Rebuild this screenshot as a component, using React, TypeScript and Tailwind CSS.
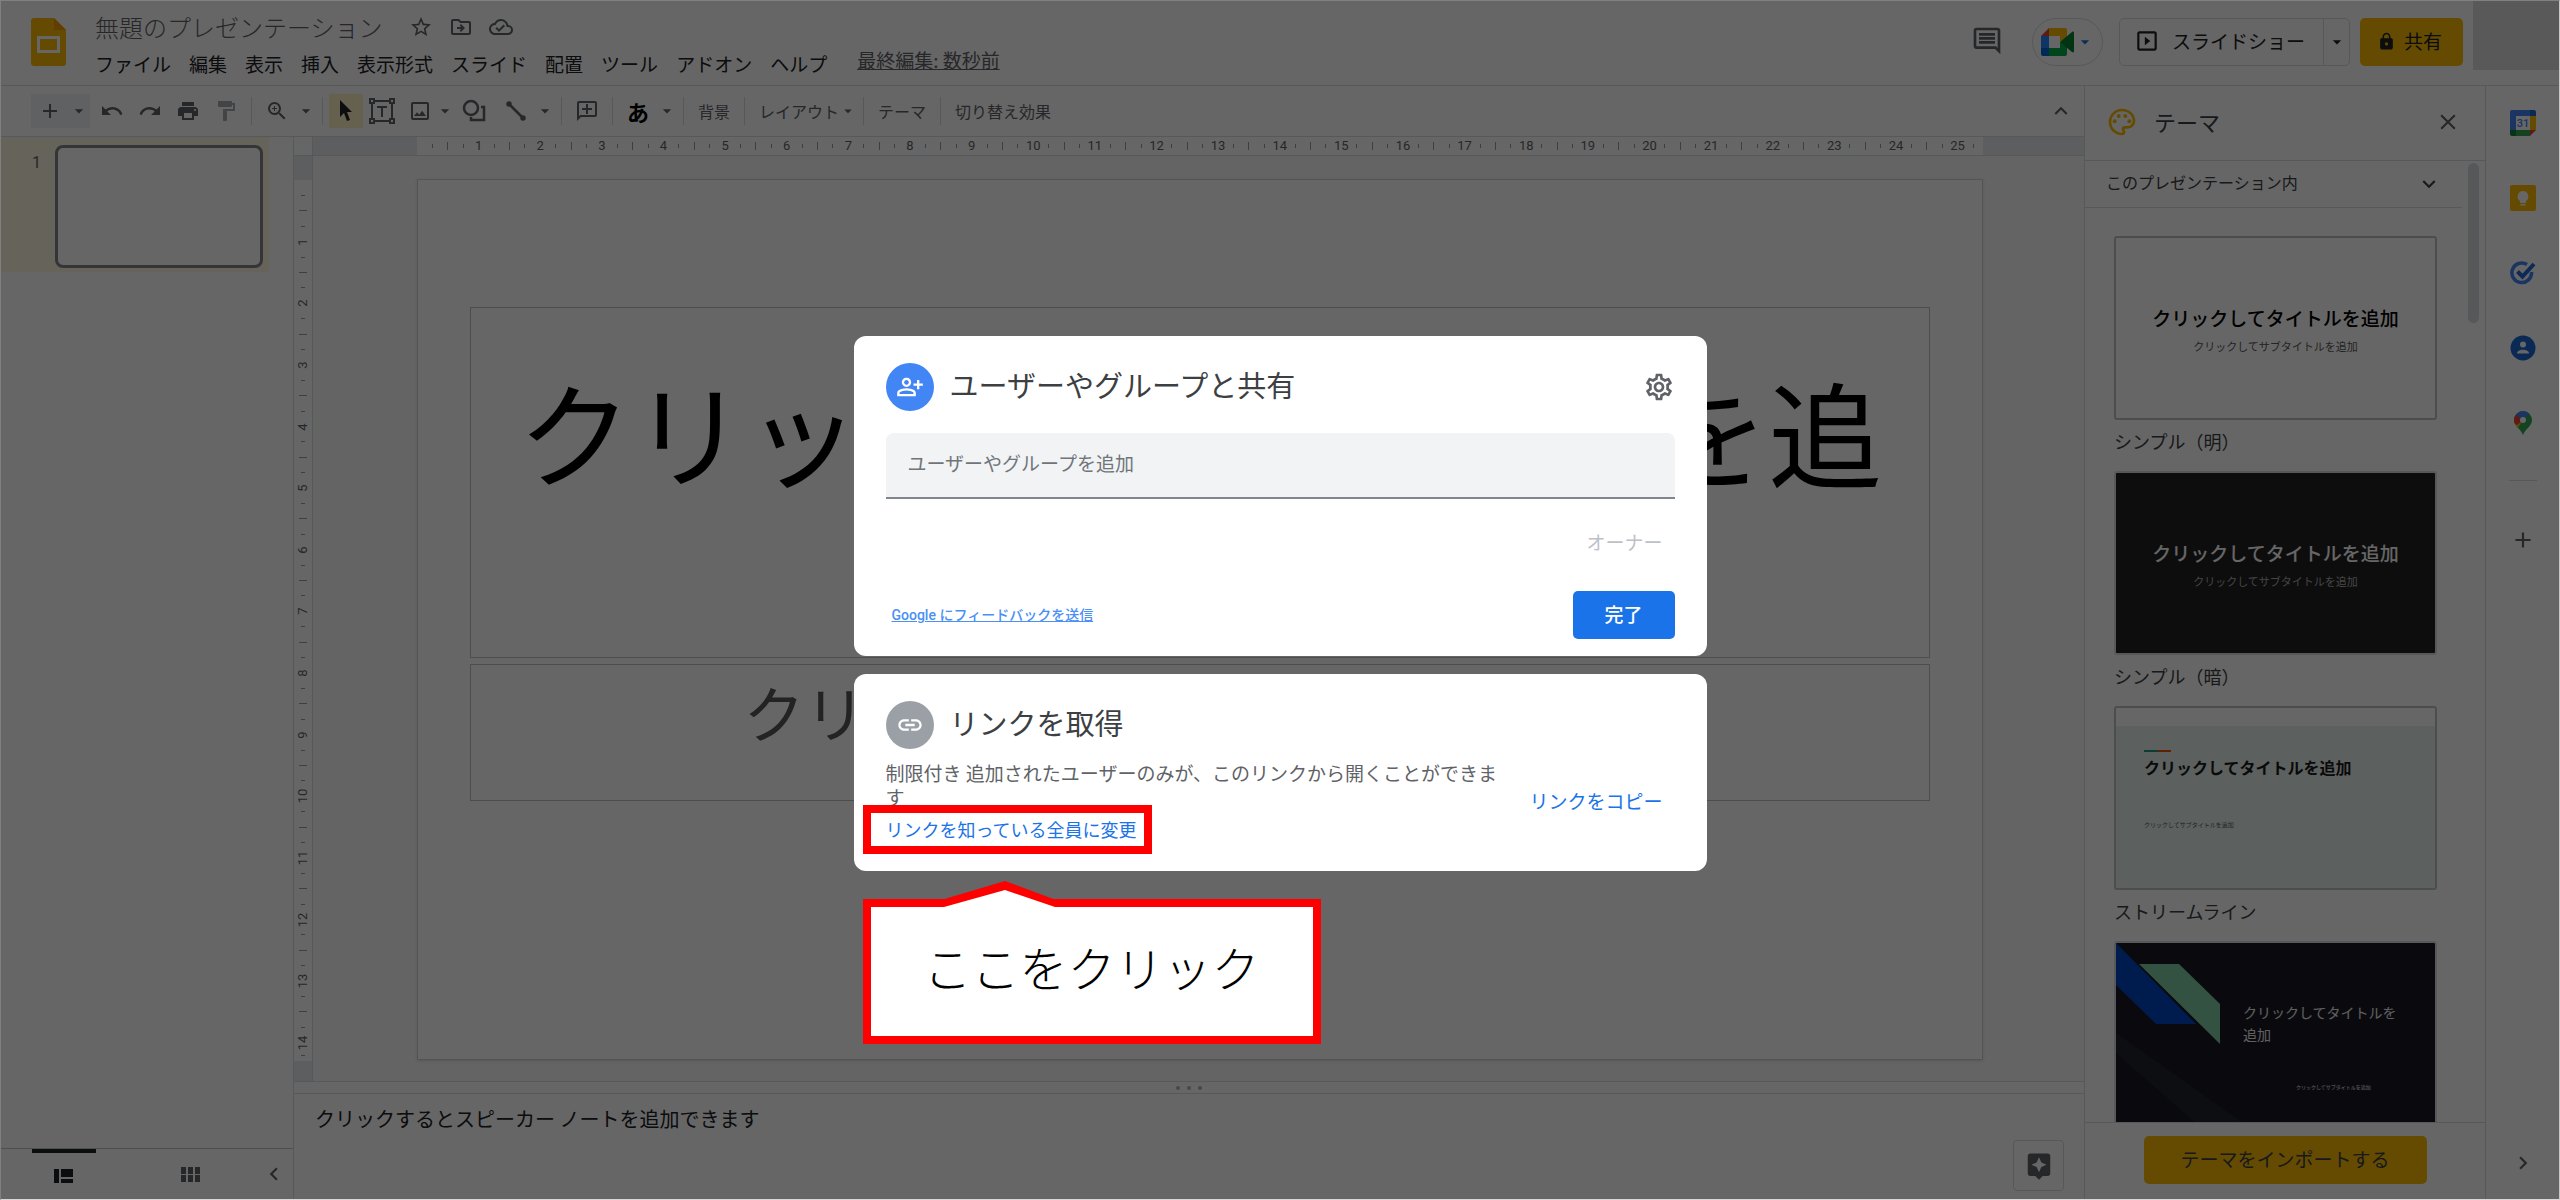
import type { ReactNode } from "react"
import {
  MdAdd,
  MdArrowDropDown,
  MdAssistant,
  MdChevronLeft,
  MdChevronRight,
  MdClose,
  MdExpandLess,
  MdExpandMore,
  MdFormatPaint,
  MdLink,
  MdLock,
  MdOutlineAddComment,
  MdOutlineCloudDone,
  MdOutlineDriveFileMove,
  MdOutlineImage,
  MdOutlineInsertComment,
  MdOutlinePalette,
  MdOutlinePersonAddAlt,
  MdOutlineSettings,
  MdOutlineSlideshow,
  MdPrint,
  MdRedo,
  MdStarBorder,
  MdUndo,
  MdZoomIn,
} from "react-icons/md"

const menus = ["ファイル", "編集", "表示", "挿入", "表示形式", "スライド", "配置", "ツール", "アドオン", "ヘルプ"]

function SlidesLogo() {
  return (
    <svg viewBox="0 0 35 48" className="h-12 w-[35px]" aria-hidden="true">
      <path d="M3 0h20l12 12v33a3 3 0 0 1-3 3H3a3 3 0 0 1-3-3V3a3 3 0 0 1 3-3z" fill="#fbbc04" />
      <path d="M23 0l12 12H23z" fill="#f29900" />
      <path d="M6 18h23v17H6zM9 21v11h17V21z" fill="#fff" fillRule="evenodd" />
    </svg>
  )
}

function MeetIcon() {
  return (
    <svg viewBox="0 0 34 28" className="h-7 w-[34px]" aria-hidden="true">
      <path d="M8 0L0 8h8z" fill="#ea4335" />
      <path d="M0 8h8v12H0z" fill="#2684fc" />
      <path d="M0 20h8v8H2a2 2 0 0 1-2-2z" fill="#0066da" />
      <path d="M8 0h16a2 2 0 0 1 2 2v7l-7 5V8H8z" fill="#fbbc04" />
      <path d="M8 20h11v-6l7 5v7a2 2 0 0 1-2 2H8z" fill="#00ac47" />
      <path d="M19 14L31 4c1-1 2 0 2 1v18c0 1-1 2-2 1z" fill="#00832d" />
    </svg>
  )
}

function CalendarIcon() {
  return (
    <svg viewBox="0 0 26 26" className="size-[26px]" aria-hidden="true">
      <path d="M2 0h18v6H6v14H0V2a2 2 0 0 1 2-2z" fill="#4285f4" />
      <path d="M20 0h4a2 2 0 0 1 2 2v4h-6z" fill="#1967d2" />
      <path d="M20 6h6v14h-6z" fill="#fbbc04" />
      <path d="M6 20h14v6H6z" fill="#34a853" />
      <path d="M0 20h6v6H2a2 2 0 0 1-2-2z" fill="#188038" />
      <path d="M20 20h6l-6 6z" fill="#ea4335" />
      <path d="M6 6h14v14H6z" fill="#fff" />
      <text x="13" y="17" textAnchor="middle" fontSize="11" fontWeight="500" fontFamily="Roboto, sans-serif" fill="#4285f4">
        31
      </text>
    </svg>
  )
}

function KeepIcon() {
  return (
    <svg viewBox="0 0 26 26" className="size-[26px]" aria-hidden="true">
      <rect width="26" height="26" rx="2" fill="#fbbc04" />
      <path d="M13 6a5.500 5.500 0 0 0-3 10v2h6v-2a5.500 5.500 0 0 0-3-10zM10.500 19h5v1.500h-5z" fill="#fff" />
    </svg>
  )
}

function TasksIcon() {
  return (
    <svg viewBox="0 0 26 26" className="size-[26px]" fill="none" aria-hidden="true">
      <path d="M17 4.500A9.800 9.800 0 1 0 21.500 12" stroke="#4285f4" strokeWidth="3.500" />
      <path d="M7.500 11.500l5 5L24 4" stroke="#2668d8" strokeWidth="4" />
    </svg>
  )
}

function ContactsIcon() {
  return (
    <svg viewBox="0 0 26 26" className="size-[26px]" aria-hidden="true">
      <circle cx="13" cy="13" r="12.500" fill="#1967d2" />
      <circle cx="13" cy="9.500" r="3" fill="#fff" />
      <path d="M7 18.500c0-5 12-5 12 0z" fill="#fff" />
    </svg>
  )
}

function MapsIcon() {
  return (
    <svg viewBox="0 0 18 24" className="h-6 w-[18px]" aria-hidden="true">
      <clipPath id="pin">
        <path d="M9 0a9 9 0 0 1 9 9c0 6-6 8-9 15C6 17 0 15 0 9a9 9 0 0 1 9-9z" />
      </clipPath>
      <g clipPath="url(#pin)">
        <path d="M0 0h18v24H0z" fill="#34a853" />
        <path d="M0 6l9 3-6 9-3-3z" fill="#fbbc04" />
        <path d="M0 0l9 9-6 5-3-2z" fill="#ea4335" />
        <path d="M2 4l7 5 7-7-3-2H5z" fill="#4285f4" />
      </g>
      <circle cx="9" cy="9" r="3" fill="#fff" />
    </svg>
  )
}

function PointerIcon() {
  return (
    <svg viewBox="0 0 14 22" className="h-[22px] w-[14px]" aria-hidden="true">
      <path d="M1 0v17l4-4 3 8 3-1-3-8h5z" fill="#202124" />
    </svg>
  )
}

function TextBoxIcon() {
  return (
    <svg viewBox="0 0 26 26" className="size-[26px]" fill="none" stroke="currentColor" strokeWidth="2" aria-hidden="true">
      <path d="M5 3h16M5 23h16M3 5v16M23 5v16M8 9h10M13 9v10" />
      <path d="M1 1h4v4H1zM21 1h4v4h-4zM1 21h4v4H1zM21 21h4v4h-4z" />
    </svg>
  )
}

function ShapeIcon() {
  return (
    <svg viewBox="0 0 24 24" className="size-6" fill="none" stroke="currentColor" strokeWidth="2.500" aria-hidden="true">
      <circle cx="9" cy="9" r="7" />
      <path d="M19 8h3v13H9v-3" />
    </svg>
  )
}

function LineIcon() {
  return (
    <svg viewBox="0 0 20 20" className="size-5" stroke="currentColor" strokeWidth="2.500" aria-hidden="true">
      <path d="M3 3l14 14" />
      <circle cx="3" cy="3" r="1.500" fill="currentColor" />
      <circle cx="17" cy="17" r="1.500" fill="currentColor" />
    </svg>
  )
}

function ToolButton({ label, children }: { label: string; children: ReactNode }) {
  return (
    <button aria-label={label} className="flex h-[34px] w-[38px] shrink-0 items-center justify-center text-2xl">
      {children}
    </button>
  )
}

function Caret({ label }: { label: string }) {
  return (
    <button aria-label={label} className="flex w-5 shrink-0 items-center justify-center text-xl">
      <MdArrowDropDown />
    </button>
  )
}

function Separator() {
  return <div className="mx-1.5 h-7 w-px shrink-0 bg-[#dadce0]" />
}

function Header() {
  return (
    <header className="flex h-[85px] shrink-0 items-start border-b border-[#dadce0] pl-[30px]">
      <div className="pt-[17px]">
        <SlidesLogo />
      </div>
      <div className="ml-[29px] flex flex-col pt-2">
        <div className="flex h-9 items-center gap-4 text-2xl text-[#5f6368]">
          <input
            aria-label="ドキュメント名"
            defaultValue="無題のプレゼンテーション"
            className="w-[298px] bg-transparent text-2xl font-light text-[#5f6368] outline-none"
          />
          <button aria-label="スター">
            <MdStarBorder />
          </button>
          <button aria-label="移動">
            <MdOutlineDriveFileMove />
          </button>
          <button aria-label="保存状態">
            <MdOutlineCloudDone />
          </button>
        </div>
        <nav className="flex h-[38px] items-center gap-[18px] text-[19px] text-[#202124]">
          {menus.map((m) => (
            <button key={m}>{m}</button>
          ))}
          <a href="#history" className="ml-3 pb-2 text-[#5f6368] underline">
            最終編集: 数秒前
          </a>
        </nav>
      </div>
      <div className="ml-auto flex items-start">
        <button aria-label="コメント履歴" className="mt-6 mr-[29px] text-[32px] text-[#5f6368]">
          <MdOutlineInsertComment />
        </button>
        <button
          aria-label="ビデオ会議"
          className="mt-[17px] flex h-12 w-[71px] items-center justify-center rounded-full border border-[#dadce0] text-[#1a73e8]"
        >
          <MeetIcon />
          <MdArrowDropDown className="text-xl" />
        </button>
        <div className="mt-[17px] ml-4 flex h-12 w-[231px] items-center rounded-[5px] border border-[#dadce0] text-[#202124]">
          <button className="flex h-full flex-1 items-center justify-center gap-3 pr-1 pb-0.5 text-[19px]">
            <MdOutlineSlideshow className="text-[26px]" />
            スライドショー
          </button>
          <button aria-label="プレゼンのオプション" className="flex h-full w-[26px] items-center justify-center border-l border-[#dadce0] text-xl">
            <MdArrowDropDown />
          </button>
        </div>
        <button className="mt-[17px] ml-2.5 flex h-12 w-[103px] items-center justify-center gap-2 rounded-[5px] bg-[#fbbc04] pr-1 pb-0.5 text-[19px] text-[#202124]">
          <MdLock />
          共有
        </button>
        <div className="ml-2.5 h-[69px] w-[86px] bg-[#dedede]" />
      </div>
    </header>
  )
}

function Toolbar() {
  return (
    <div className="flex h-[51px] shrink-0 items-center border-b border-[#dadce0] pl-[30px] text-base text-[#5f6368]">
      <div className="mr-[3px] flex h-[34px] w-[59px] items-center bg-[#f1f3f4]">
        <ToolButton label="新しいスライド">
          <MdAdd />
        </ToolButton>
        <Caret label="レイアウト付き" />
      </div>
      <ToolButton label="元に戻す">
        <MdUndo />
      </ToolButton>
      <ToolButton label="やり直し">
        <MdRedo />
      </ToolButton>
      <ToolButton label="印刷">
        <MdPrint />
      </ToolButton>
      <ToolButton label="書式を貼り付け">
        <MdFormatPaint className="text-[#a8abaf]" />
      </ToolButton>
      <Separator />
      <ToolButton label="ズーム">
        <MdZoomIn />
      </ToolButton>
      <Caret label="ズーム倍率" />
      <Separator />
      <button aria-label="選択" className="flex h-[34px] w-[34px] shrink-0 items-center justify-center bg-[#feefc3]">
        <PointerIcon />
      </button>
      <ToolButton label="テキストボックス">
        <TextBoxIcon />
      </ToolButton>
      <ToolButton label="画像を挿入">
        <MdOutlineImage />
      </ToolButton>
      <div className="-mx-1 flex">
        <Caret label="画像の種類" />
      </div>
      <div className="mx-1">
        <ToolButton label="図形">
          <ShapeIcon />
        </ToolButton>
      </div>
      <ToolButton label="線">
        <LineIcon />
      </ToolButton>
      <Caret label="線の種類" />
      <Separator />
      <ToolButton label="コメントを追加">
        <MdOutlineAddComment className="-scale-x-100" />
      </ToolButton>
      <Separator />
      <ToolButton label="入力ツール">
        <span className="text-[22px] leading-8 font-bold text-black">あ</span>
      </ToolButton>
      <Caret label="入力ツールの選択" />
      <Separator />
      <button className="px-2">背景</button>
      <Separator />
      <button className="flex items-center pl-2">
        レイアウト
        <MdArrowDropDown className="text-lg" />
      </button>
      <Separator />
      <button className="px-2">テーマ</button>
      <Separator />
      <button className="px-2">切り替え効果</button>
      <button aria-label="メニューを隠す" className="mr-2.5 ml-auto text-[26px]">
        <MdExpandLess />
      </button>
    </div>
  )
}

function Filmstrip() {
  return (
    <div className="flex w-[293px] shrink-0 flex-col border-r border-[#dadce0]">
      <div className="flex h-[135px] w-[268px] bg-[#fef7e0] pt-2">
        <span className="w-[54px] pt-1.5 pr-3.5 text-right font-[Roboto] text-base leading-6 text-[#5f6368]">1</span>
        <button aria-label="スライド 1" className="h-[123px] w-[208px] rounded-lg border-[3px] border-[#80868b] bg-white" />
      </div>
      <div className="mt-auto flex h-[51px] border-t border-[#c4c7c9] text-[#5f6368]">
        <div className="flex w-[125px] justify-center">
          <button aria-label="フィルムストリップ表示" className="flex w-16 items-center justify-center border-t-4 border-[#202124] text-[#202124]">
            <svg viewBox="0 0 19 14" className="h-3.5 w-[19px]" fill="currentColor" aria-hidden="true">
              <path d="M0 0h5v14H0zM7 0h12v8H7zM7 10h12v4H7z" />
            </svg>
          </button>
        </div>
        <button aria-label="グリッド表示" className="flex w-[128px] items-center justify-center">
          <svg viewBox="0 0 19 15" className="h-[15px] w-[19px]" fill="currentColor" aria-hidden="true">
            <path d="M0 0h5v7H0zM7 0h5v7H7zM14 0h5v7h-5zM0 8h5v7H0zM7 8h5v7H7zM14 8h5v7h-5z" />
          </svg>
        </button>
        <button aria-label="閉じる" className="flex flex-1 items-center justify-center text-[26px]">
          <MdChevronLeft />
        </button>
      </div>
    </div>
  )
}

const horizontalMarks = Array.from({ length: 101 }, (_, i) => i + 1)
const verticalMarks = Array.from({ length: 56 }, (_, i) => i + 1)

// four marks per centimetre: number, short, long, short
function HorizontalRuler() {
  return (
    <div className="flex h-[19px] border-b border-[#dadce0] bg-[#e8eaed] pr-[101px] pl-[104px]">
      <div className="flex min-w-0 flex-1 items-center bg-white font-[Roboto] text-[13px] leading-4 text-[#5f6368]">
        <div className="flex-[0.5]" />
        {horizontalMarks.map((n) => (
          <div key={n} className="flex w-0 flex-1 items-center justify-center">
            {n % 4 === 0 ? n / 4 : n % 2 === 0 ? <i className="h-2 w-px bg-[#9aa0a6]" /> : <i className="h-1 w-px bg-[#9aa0a6]" />}
          </div>
        ))}
        <div className="flex-[0.1]" />
      </div>
    </div>
  )
}

function VerticalRuler() {
  return (
    <div className="flex w-[19px] shrink-0 flex-col border-r border-[#dadce0]">
      <div className="h-[19px] border-b border-[#dadce0] bg-white" />
      <div className="h-6 bg-[#e8eaed]" />
      <div className="flex min-h-0 flex-1 flex-col items-center bg-white font-[Roboto] text-[13px] leading-4 text-[#5f6368]">
        <div className="flex-[0.5]" />
        {verticalMarks.map((n) => (
          <div key={n} className="flex h-0 flex-1 items-center justify-center">
            {n % 4 === 0 ? (
              <span className="-rotate-90">{n / 4}</span>
            ) : n % 2 === 0 ? (
              <i className="h-px w-2 bg-[#9aa0a6]" />
            ) : (
              <i className="h-px w-1 bg-[#9aa0a6]" />
            )}
          </div>
        ))}
        <div className="flex flex-[0.7] items-center">
          <i className="h-px w-1 bg-[#9aa0a6]" />
        </div>
      </div>
      <div className="h-5 bg-[#e8eaed]" />
    </div>
  )
}

function Editor() {
  return (
    <div className="flex min-w-0 flex-1 flex-col">
      <div className="flex min-h-0 flex-1">
        <VerticalRuler />
        <div className="flex min-w-0 flex-1 flex-col bg-[#f9f9f9]">
          <HorizontalRuler />
          <div className="pt-[23px] pr-[101px] pl-[104px]">
            <div className="flex aspect-video flex-col border border-[#d0d2d5] bg-white px-[52px] pt-[127px] text-center shadow">
              <div className="flex h-[351px] items-end justify-center border border-[#bdc1c6] px-2.5 pb-5 text-[114px] leading-[138px] text-black">
                <p>クリックしてタイトルを追加</p>
              </div>
              <div className="mt-1.5 h-[137px] border border-[#bdc1c6] pt-1 text-[61px] leading-[86px] text-[#595959]">
                クリックしてサブタイトルを追加
              </div>
            </div>
          </div>
        </div>
      </div>
      <div className="flex h-[13px] shrink-0 items-center justify-center gap-[7px] border-y border-[#dadce0] bg-white">
        <i className="size-1 rounded-full bg-[#b0b3b8]" />
        <i className="size-1 rounded-full bg-[#b0b3b8]" />
        <i className="size-1 rounded-full bg-[#b0b3b8]" />
      </div>
      <div className="flex h-[105px] shrink-0 justify-between bg-white pr-5 pl-[21px]">
        <p className="pt-[9px] text-xl leading-8 text-[#202124]">クリックするとスピーカー ノートを追加できます</p>
        <button
          aria-label="データ探索"
          className="mt-[46px] flex h-[51px] w-[51px] items-center justify-center rounded border border-[#dadce0] text-[30px] text-[#5f6368]"
        >
          <MdAssistant />
        </button>
      </div>
    </div>
  )
}

function ThemeItem({ name, children }: { name: string; children: ReactNode }) {
  return (
    <button className="flex h-[235px] w-full flex-col items-stretch text-left">
      {children}
      <span className="pt-[7px] text-lg leading-7 text-[#3c4043]">{name}</span>
    </button>
  )
}

function ThemePanel() {
  return (
    <aside className="flex w-[402px] shrink-0 flex-col border-x border-[#dadce0] bg-white text-[#3c4043]">
      <div className="flex h-[75px] shrink-0 items-center border-b border-[#dadce0] pr-6 pb-0.5 pl-[21px]">
        <MdOutlinePalette className="text-[32px] text-[#fbbc04]" />
        <h2 className="ml-4 pb-0.5 text-[22px]">テーマ</h2>
        <button aria-label="閉じる" className="ml-auto text-[26px] text-[#5f6368]">
          <MdClose />
        </button>
      </div>
      <div className="flex min-h-0 flex-1">
        <div className="min-w-0 flex-1 overflow-hidden">
          <button className="flex h-[47px] w-full items-center justify-between border-b border-[#dadce0] pr-5 pl-[21px] text-base">
            <span className="pb-1">このプレゼンテーション内</span>
            <MdExpandMore className="text-[26px]" />
          </button>
          <div className="pt-7 pr-[25px] pl-[29px]">
            <ThemeItem name="シンプル（明）">
              <div className="flex h-[184px] flex-col items-center rounded-[3px] border-2 border-[#bdc1c6] pt-[66px]">
                <p className="text-[19px] leading-7 font-medium text-black">クリックしてタイトルを追加</p>
                <p className="pt-1 text-[11px] leading-5 text-[#595959]">クリックしてサブタイトルを追加</p>
              </div>
            </ThemeItem>
            <ThemeItem name="シンプル（暗）">
              <div className="flex h-[184px] flex-col items-center rounded-[3px] border-2 border-[#dadce0] bg-[#212121] pt-[66px]">
                <p className="text-[19px] leading-7 font-medium text-white">クリックしてタイトルを追加</p>
                <p className="pt-1 text-[11px] leading-5 text-[#adadad]">クリックしてサブタイトルを追加</p>
              </div>
            </ThemeItem>
            <ThemeItem name="ストリームライン">
              <div className="h-[184px] rounded-[3px] border-2 border-[#bdc1c6] pt-[18px]">
                <div className="h-[162px] bg-[#e7efec] pt-6 pl-7">
                  <div className="flex h-0.5">
                    <i className="w-[14px] bg-[#1a9988]" />
                    <i className="w-[13px] bg-[#eb5600]" />
                  </div>
                  <p className="pt-px text-base leading-7 font-bold text-[#1a1a1a]">クリックしてタイトルを追加</p>
                  <p className="pt-9 text-[6px] leading-4 text-[#595959]">クリックしてサブタイトルを追加</p>
                </div>
              </div>
            </ThemeItem>
            <ThemeItem name="">
              <div className="flex h-[184px] rounded-[3px] border-2 border-[#dadce0] bg-[#191b25]">
                <svg viewBox="0 0 127 180" className="h-[180px] w-[127px] shrink-0" aria-hidden="true">
                  <path d="M0 0l80 81H40L0 42z" fill="#0145c0" />
                  <path d="M23 21h40l41 40v40z" fill="#80cda5" />
                  <path d="M0 90l127 90H80L0 110z" fill="#20232b" />
                </svg>
                <div className="w-[165px]">
                  <p className="pt-[58px] text-sm leading-[22px] text-[#eeeeee]">クリックしてタイトルを追加</p>
                  <p className="pt-[34px] pl-[53px] text-[5px] leading-4 text-[#eeeeee]">クリックしてサブタイトルを追加</p>
                </div>
              </div>
            </ThemeItem>
          </div>
        </div>
        <div className="w-[23px] pt-0.5 pl-1.5">
          <div className="h-[160px] w-[11px] rounded-full bg-[#dadce0]" />
        </div>
      </div>
      <div className="flex h-[77px] shrink-0 justify-center border-t border-[#dadce0] pt-[13px]">
        <button className="h-12 w-[283px] rounded-[5px] bg-[#fbbc04] pb-0.5 text-[19px] text-[#3c4043]">テーマをインポートする</button>
      </div>
    </aside>
  )
}

function SideRail() {
  const apps = [
    { name: "カレンダー", icon: <CalendarIcon /> },
    { name: "Keep", icon: <KeepIcon /> },
    { name: "ToDo リスト", icon: <TasksIcon /> },
    { name: "連絡先", icon: <ContactsIcon /> },
    { name: "マップ", icon: <MapsIcon /> },
  ]
  return (
    <div className="flex w-[73px] shrink-0 flex-col items-center bg-white text-[26px] text-[#5f6368]">
      {apps.map((app) => (
        <button key={app.name} aria-label={app.name} className="flex h-[75px] w-full shrink-0 items-center justify-center pb-0.5">
          {app.icon}
        </button>
      ))}
      <div className="mt-[19px] h-px w-7 bg-[#dadce0]" />
      <button aria-label="アドオンを取得" className="mt-[46px]">
        <MdAdd />
      </button>
      <button aria-label="サイドパネルを隠す" className="mt-auto mb-[23px]">
        <MdChevronRight />
      </button>
    </div>
  )
}

function Callout() {
  return (
    <div className="absolute top-full left-[9px] mt-7 flex h-[145px] w-[458px] items-center justify-center border-8 border-[#ff0000] bg-white pb-3">
      <svg viewBox="0 0 116 26" className="absolute -top-[26px] left-[70px] h-[26px] w-[116px]" aria-hidden="true">
        <path d="M0 19L64 0l51 19z" fill="#ff0000" />
        <path d="M0 18h116v8H0z" fill="#ff0000" />
        <path d="M3 26L64 9l50 17z" fill="#fff" />
      </svg>
      <p className="text-5xl leading-[64px] font-light text-black">ここをクリック</p>
    </div>
  )
}

function ShareDialog() {
  return (
    <div className="absolute inset-0 flex items-start justify-center bg-black/60 pt-[335px]">
      <div role="dialog" aria-label="共有" className="relative flex w-[853px] flex-col gap-[18px]">
        <section className="h-80 rounded-xl bg-white px-8 pt-[27px]">
          <div className="flex h-12 items-center">
            <span className="flex size-12 items-center justify-center rounded-full bg-[#4285f4] text-[28px] text-white">
              <MdOutlinePersonAddAlt />
            </span>
            <h1 className="ml-4 pb-1 text-[29px] text-[#3c4043]">ユーザーやグループと共有</h1>
            <button aria-label="設定" className="ml-auto text-[32px] text-[#5f6368]">
              <MdOutlineSettings />
            </button>
          </div>
          <input
            aria-label="ユーザーやグループを追加"
            placeholder="ユーザーやグループを追加"
            className="mt-[22px] block h-[66px] w-full rounded-t-lg border-b-2 border-[#80868b] bg-[#f1f3f4] px-[22px] pb-1.5 text-[19px] outline-none placeholder:text-[#70757a]"
          />
          <p className="pt-[27px] pr-3 text-right text-[19px] leading-8 text-[#bdc1c6]">オーナー</p>
          <div className="flex items-center justify-between pt-[33px]">
            <a href="#feedback" className="pl-1.5 font-[Roboto,'Noto_Sans_CJK_JP',sans-serif] text-sm font-medium text-[#4a90f5] underline">
              Google にフィードバックを送信
            </a>
            <button className="h-12 w-[102px] rounded-[5px] bg-[#1a73e8] pb-0.5 text-[19px] font-medium text-white">完了</button>
          </div>
        </section>
        <section className="h-[197px] rounded-xl bg-white px-8 pt-[27px]">
          <div className="flex h-12 items-center">
            <span className="flex size-12 items-center justify-center rounded-full bg-[#9aa0a6] text-[28px] text-white">
              <MdLink />
            </span>
            <h2 className="ml-4 pb-1 text-[29px] text-[#3c4043]">リンクを取得</h2>
          </div>
          <div className="flex items-center justify-between pt-3">
            <div className="w-[622px]">
              <p className="text-[19px] leading-6 text-[#5f6368]">
                制限付き 追加されたユーザーのみが、このリンクから開くことができます
              </p>
              <button className="mt-1 block text-lg leading-8 text-[#1a73e8]">リンクを知っている全員に変更</button>
            </div>
            <button className="pr-3 pb-1 text-[19px] leading-8 text-[#1a73e8]">リンクをコピー</button>
          </div>
        </section>
        {/* highlight frame around the "anyone with the link" action */}
        <div className="pointer-events-none absolute bottom-[17px] left-[9px] h-[49px] w-[289px] border-8 border-[#ff0000]" />
        <Callout />
      </div>
    </div>
  )
}

export default function App() {
  return (
    <div
      lang="ja"
      className="relative flex h-screen flex-col overflow-hidden border border-t-[#808080] border-r-[#c8c8c8] border-b-[#d8d8d8] border-l-[#808080] bg-white font-['Noto_Sans_CJK_JP',sans-serif]"
    >
      <Header />
      <div className="flex min-h-0 flex-1">
        <main className="flex min-w-0 flex-1 flex-col">
          <Toolbar />
          <div className="flex min-h-0 flex-1">
            <Filmstrip />
            <Editor />
          </div>
        </main>
        <ThemePanel />
        <SideRail />
      </div>
      <ShareDialog />
    </div>
  )
}
